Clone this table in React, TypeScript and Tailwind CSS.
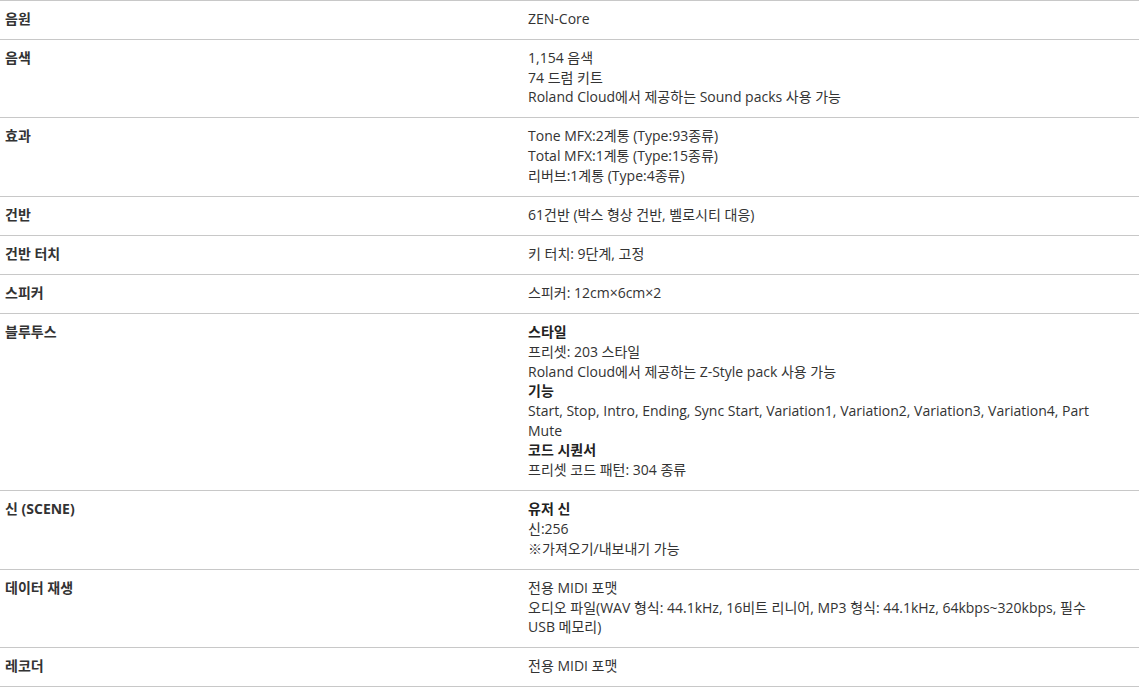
import React from "react";

type Line = { t: string; b?: boolean };
type Row = { k: string; v: Line[] };

const rows: Row[] = [
  { k: "음원", v: [{ t: "ZEN-Core" }] },
  {
    k: "음색",
    v: [
      { t: "1,154 음색" },
      { t: "74 드럼 키트" },
      { t: "Roland Cloud에서 제공하는 Sound packs 사용 가능" },
    ],
  },
  {
    k: "효과",
    v: [
      { t: "Tone MFX:2계통 (Type:93종류)" },
      { t: "Total MFX:1계통 (Type:15종류)" },
      { t: "리버브:1계통 (Type:4종류)" },
    ],
  },
  { k: "건반", v: [{ t: "61건반 (박스 형상 건반, 벨로시티 대응)" }] },
  { k: "건반 터치", v: [{ t: "키 터치: 9단계, 고정" }] },
  { k: "스피커", v: [{ t: "스피커: 12cm×6cm×2" }] },
  {
    k: "블루투스",
    v: [
      { t: "스타일", b: true },
      { t: "프리셋: 203 스타일" },
      { t: "Roland Cloud에서 제공하는 Z-Style pack 사용 가능" },
      { t: "기능", b: true },
      {
        t: "Start, Stop, Intro, Ending, Sync Start, Variation1, Variation2, Variation3, Variation4, Part Mute",
      },
      { t: "코드 시퀀서", b: true },
      { t: "프리셋 코드 패턴: 304 종류" },
    ],
  },
  {
    k: "신 (SCENE)",
    v: [{ t: "유저 신", b: true }, { t: "신:256" }, { t: "※가져오기/내보내기 가능" }],
  },
  {
    k: "데이터 재생",
    v: [
      { t: "전용 MIDI 포맷" },
      {
        t: "오디오 파일(WAV 형식: 44.1kHz, 16비트 리니어, MP3 형식: 44.1kHz, 64kbps~320kbps, 필수 USB 메모리)",
      },
    ],
  },
  { k: "레코더", v: [{ t: "전용 MIDI 포맷" }] },
];

export default function App() {
  return (
    <div
      className="w-[1139px] bg-white text-[#333] text-[14px] leading-[19.6px] border-t border-[#c8c8c8]"
      style={{ fontFamily: '"Open Sans", "Noto Sans CJK KR", sans-serif' }}
    >
      {rows.map((r) => (
        <div key={r.k} className="flex border-b border-[#c8c8c8]">
          <div className="w-[523px] shrink-0 pl-[5px] pt-[8px] pb-[10.5px] font-bold">
            {r.k}
          </div>
          <div className="flex-1 pl-[5px] pr-[25px] pt-[8px] pb-[10.5px]">
            {r.v.map((l, i) => (
              <div key={i} className={l.b ? "font-bold leading-[20px] text-[#222]" : ""}>
                {l.t}
              </div>
            ))}
          </div>
        </div>
      ))}
    </div>
  );
}
